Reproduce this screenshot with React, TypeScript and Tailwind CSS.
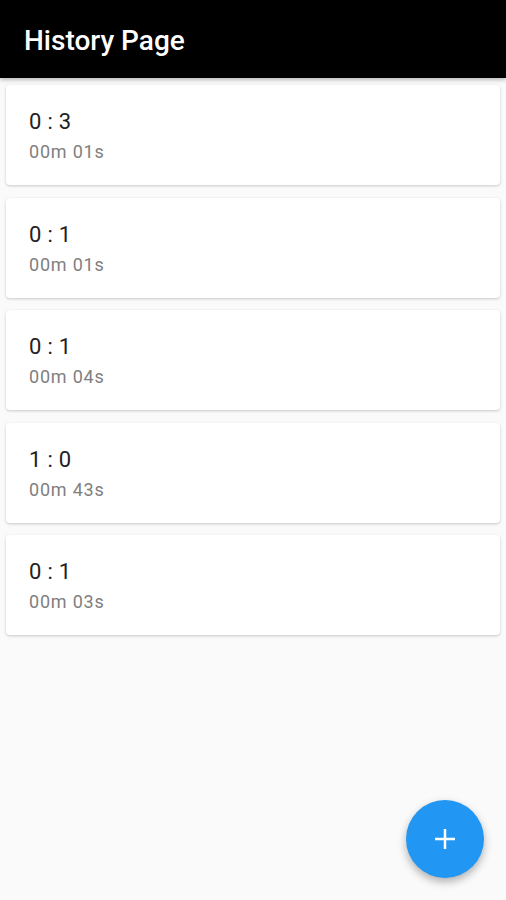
import React from "react"

const games = [
  { score: "0 : 3", time: "00m 01s" },
  { score: "0 : 1", time: "00m 01s" },
  { score: "0 : 1", time: "00m 04s" },
  { score: "1 : 0", time: "00m 43s" },
  { score: "0 : 1", time: "00m 03s" },
]

const HistoryCard = ({ score, time }: { score: string; time: string }) => (
  <div className="h-[100px] rounded-[4px] bg-white px-[23px] pt-[24px] shadow-[0_1px_3px_rgba(0,0,0,0.2)]">
    <div className="text-[22px] leading-[26px] tracking-[0.3px] text-[#222]">{score}</div>
    <div className="mt-[6px] text-[18px] leading-[22px] tracking-[0.8px] text-[#808080]">{time}</div>
  </div>
)

export default function App() {
  return (
    <div className="relative h-[900px] overflow-hidden bg-[#fafafa] font-['Roboto',sans-serif]">
      <header className="flex h-[78px] items-center bg-black px-[24px] pt-[4px] shadow-[0_2px_4px_rgba(0,0,0,0.25)]">
        <h1 className="text-[28px] font-medium text-white">History Page</h1>
      </header>

      <div className="flex flex-col gap-[12.5px] px-[6px] pt-[7px]">
        {games.map((g, i) => (
          <HistoryCard key={i} score={g.score} time={g.time} />
        ))}
      </div>

      {/* floating add button */}
      <button className="absolute bottom-[22px] right-[22px] flex h-[78px] w-[78px] items-center justify-center rounded-full bg-[#2196f3] shadow-[0_4px_8px_rgba(0,0,0,0.3)]">
        <svg width="24" height="24" viewBox="0 0 24 24" fill="none" stroke="white" strokeWidth="2.5">
          <path d="M12 2v20M2 12h20" />
        </svg>
      </button>
    </div>
  )
}
